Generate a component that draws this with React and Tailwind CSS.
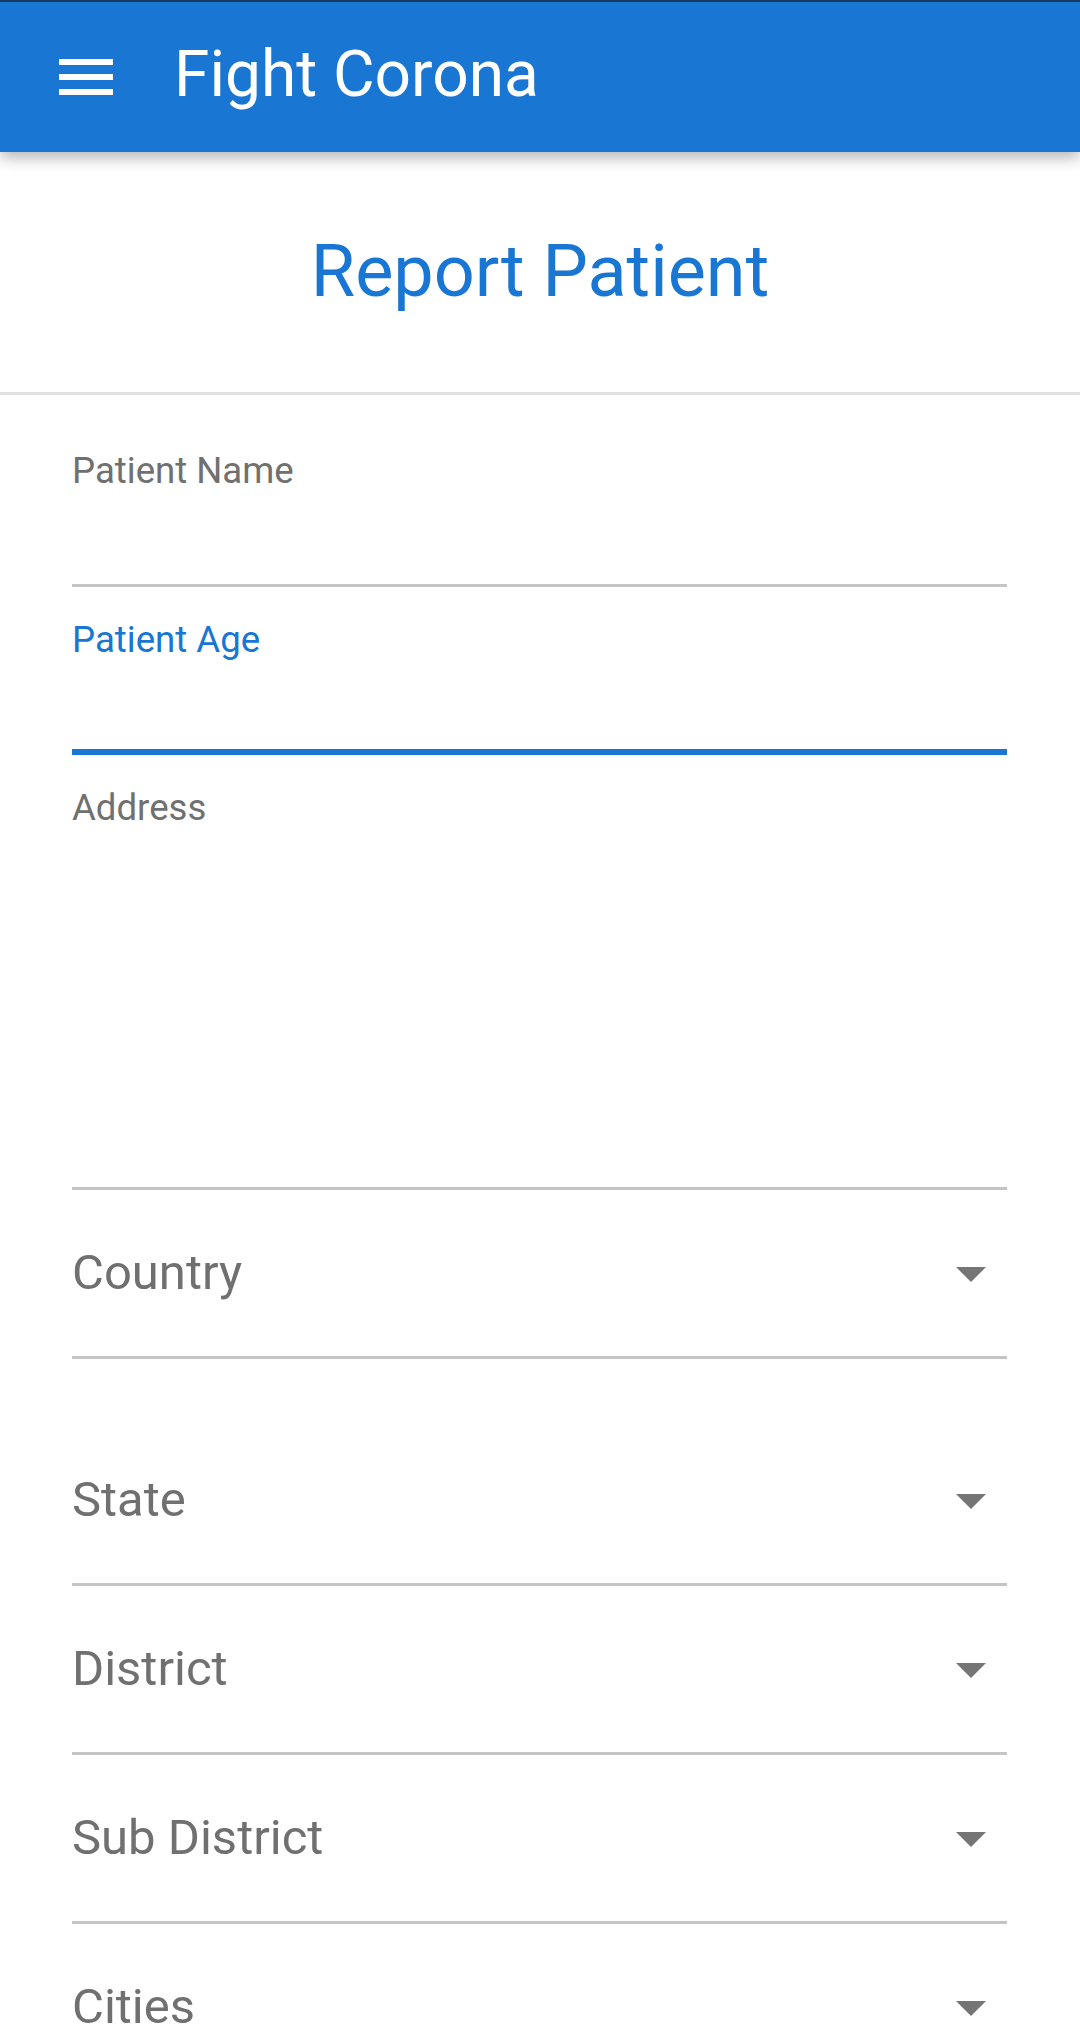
import React from "react";

const font = { fontFamily: "Roboto, 'Noto Sans', sans-serif" };

function Menu() {
  return (
    <svg width="72" height="72" viewBox="0 0 24 24" className="shrink-0">
      <path d="M3 18h18v-2H3v2zm0-5h18v-2H3v2zm0-7v2h18V6H3z" fill="#ffffff" />
    </svg>
  );
}

function Arrow() {
  return (
    <svg width="72" height="72" viewBox="0 0 24 24" className="shrink-0">
      <path d="M7 10l5 5 5-5z" fill="#757575" />
    </svg>
  );
}

function TextField({ label, focused, inputH }) {
  return (
    <div
      className={
        "pt-[29px] " +
        (focused ? "border-b-[6px] border-[#1976d2]" : "border-b-[3px] border-[#c4c4c4]")
      }
    >
      <div
        className={
          "text-[36.6px] leading-[48px] " + (focused ? "text-[#1976d2]" : "text-[#707070]")
        }
      >
        {label}
      </div>
      <div style={{ height: inputH }} />
    </div>
  );
}

function Dropdown({ label }) {
  return (
    <div className="h-[169px] border-b-[3px] border-[#c4c4c4] flex items-center justify-between">
      <span className="text-[49px] text-[#707070]">{label}</span>
      <Arrow />
    </div>
  );
}

export default function App() {
  return (
    <div className="w-[1080px] min-h-[2033px] bg-white overflow-hidden" style={font}>
      <header className="relative z-10 h-[152px] bg-[#1976d2] border-t-2 border-[#173a63] flex items-center shadow-[0_6px_14px_rgba(0,0,0,0.28)]">
        <div className="ml-[50px]">
          <Menu />
        </div>
        <h1 className="ml-[52px] mb-[5px] text-[64px] leading-none text-white font-normal">
          Fight Corona
        </h1>
      </header>

      <div className="pt-[78px] pb-[78px] text-center text-[72px] leading-[84px] text-[#1976d2]">
        Report Patient
      </div>
      <div className="h-[3px] bg-[#e0e0e0]" />

      <div className="pl-[72px] pr-[73px] pt-[23px]">
        <TextField label="Patient Name" inputH={89} />
        <TextField label="Patient Age" focused inputH={85} />
        <TextField label="Address" inputH={355} />
        <Dropdown label="Country" />
        <div className="h-[58px]" />
        <Dropdown label="State" />
        <Dropdown label="District" />
        <Dropdown label="Sub District" />
        <Dropdown label="Cities" />
      </div>
    </div>
  );
}
